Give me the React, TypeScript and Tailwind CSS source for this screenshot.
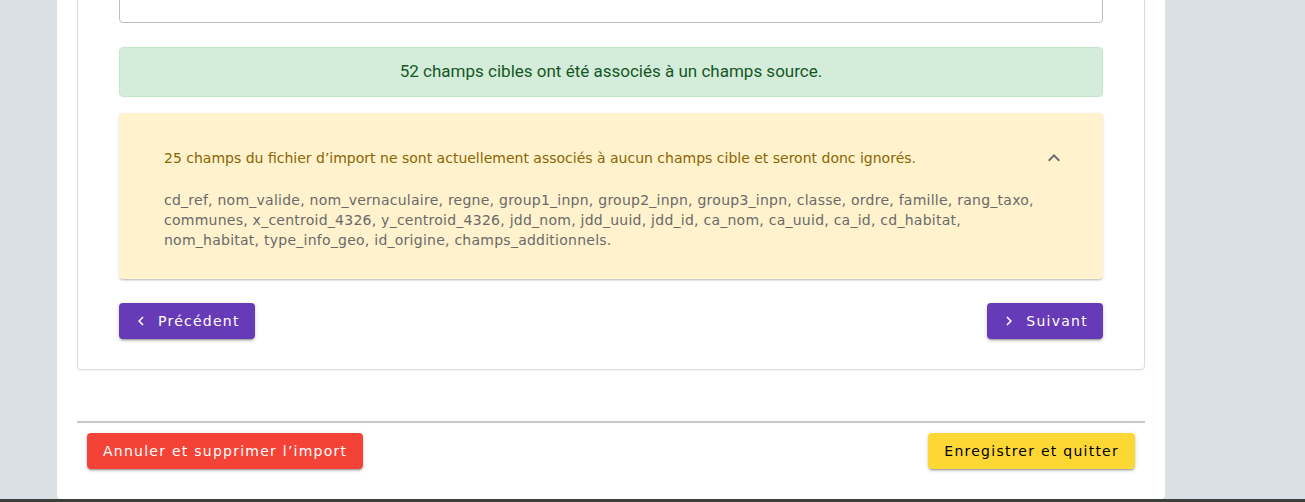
import React, { useState } from 'react';

const fields = [
  'cd_ref', 'nom_valide', 'nom_vernaculaire', 'regne', 'group1_inpn', 'group2_inpn', 'group3_inpn',
  'classe', 'ordre', 'famille', 'rang_taxo', 'communes', 'x_centroid_4326', 'y_centroid_4326',
  'jdd_nom', 'jdd_uuid', 'jdd_id', 'ca_nom', 'ca_uuid', 'ca_id', 'cd_habitat', 'nom_habitat',
  'type_info_geo', 'id_origine', 'champs_additionnels',
];

const ChevronLeft = () => (
  <svg width="18" height="18" viewBox="0 0 24 24" fill="currentColor">
    <path d="M15.41 7.41 14 6l-6 6 6 6 1.41-1.41L10.83 12z" />
  </svg>
);

const ChevronRight = () => (
  <svg width="18" height="18" viewBox="0 0 24 24" fill="currentColor">
    <path d="M10 6 8.59 7.41 13.17 12l-4.58 4.59L10 18l6-6z" />
  </svg>
);

const ExpandLess = () => (
  <svg width="24" height="24" viewBox="0 0 24 24" fill="currentColor">
    <path d="m12 8-6 6 1.41 1.41L12 10.83l4.59 4.58L18 14z" />
  </svg>
);

export default function App() {
  const [open, setOpen] = useState(true);

  return (
    <div className="h-[502px] overflow-hidden bg-[#dae1e4] flex flex-col font-['DejaVu_Sans',sans-serif]">
      <div className="flex-1 flex">
        <div className="ml-[57px] w-[1108px] h-[499px] bg-white rounded-b-[4px] px-5 flex flex-col">
          {/* Carte du mapping */}
          <div className="-mt-[30px] border border-[#dcdcdc] rounded-[4px] shadow-[0_1px_2px_rgba(0,0,0,0.06)] px-[41px] pb-[30px]">
            <div className="h-[52px] border border-[#bdbdbd] rounded-[4px]" />

            <div className="mt-[24px] h-[50px] rounded-[4px] border border-[#c3e6cb] bg-[#d4edda] flex items-center justify-center text-[#155724] text-[17px] font-['Roboto',sans-serif]">
              52 champs cibles ont été associés à un champs source.
            </div>

            <div className="mt-4 rounded-[4px] bg-[#fff2cc] shadow-[0_2px_2px_-1px_rgba(0,0,0,0.2),0_1px_3px_rgba(0,0,0,0.12)] pl-[45px] pr-[37px] pt-[35px] pb-[29px]">
              <div className="flex items-center justify-between h-5 cursor-pointer" onClick={() => setOpen(!open)}>
                <span className="text-[14px] text-[#8a6504]">
                  25 champs du fichier d’import ne sont actuellement associés à aucun champs cible et seront donc ignorés.
                </span>
                <span className={`text-[#6b6b6b] ${open ? '' : 'rotate-180'}`}>
                  <ExpandLess />
                </span>
              </div>
              {open && (
                <p className="mt-[22px] mr-[20px] text-[14px] leading-5 tracking-[0.25px] text-[#6a6a6a]">
                  {fields.join(', ')}.
                </p>
              )}
            </div>

            <div className="mt-6 flex justify-between">
              <button className="h-9 pl-[13px] pr-[15px] flex items-center gap-[8px] rounded-[4px] bg-[#673ab7] text-white text-[14px] tracking-[1.25px] shadow-[0_3px_1px_-2px_rgba(0,0,0,0.2),0_2px_2px_rgba(0,0,0,0.14),0_1px_5px_rgba(0,0,0,0.12)]">
                <ChevronLeft />
                Précédent
              </button>
              <button className="h-9 pl-[13px] pr-[15px] flex items-center gap-[8px] rounded-[4px] bg-[#673ab7] text-white text-[14px] tracking-[1.25px] shadow-[0_3px_1px_-2px_rgba(0,0,0,0.2),0_2px_2px_rgba(0,0,0,0.14),0_1px_5px_rgba(0,0,0,0.12)]">
                <ChevronRight />
                Suivant
              </button>
            </div>
          </div>

          {/* Barre d'actions */}
          <div className="mt-[51px] border-t-2 border-[#c8c8cc] px-[10px] pt-[10px] flex justify-between">
            <button className="h-9 px-4 rounded-[4px] bg-[#f44336] text-white text-[14px] tracking-[1.25px] shadow-[0_3px_1px_-2px_rgba(0,0,0,0.2),0_2px_2px_rgba(0,0,0,0.14),0_1px_5px_rgba(0,0,0,0.12)]">
              Annuler et supprimer l’import
            </button>
            <button className="h-9 px-4 rounded-[4px] bg-[#fdd835] text-black text-[14px] tracking-[1.25px] shadow-[0_3px_1px_-2px_rgba(0,0,0,0.2),0_2px_2px_rgba(0,0,0,0.14),0_1px_5px_rgba(0,0,0,0.12)]">
              Enregistrer et quitter
            </button>
          </div>
        </div>
      </div>
      <div className="h-[3px] bg-[#3c4038]" />
    </div>
  );
}
